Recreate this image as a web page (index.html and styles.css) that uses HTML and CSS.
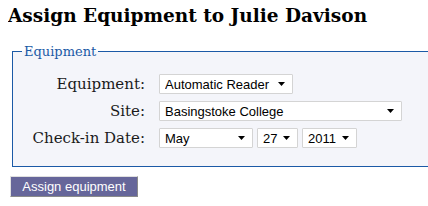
FILE: index.html
```
<!DOCTYPE html>
<html lang="en">

<head>
  <meta charset="UTF-8" />
  <title>Assign Equipment</title>
  <link rel="stylesheet" href="styles.css">
</head>

<body>
  <h1>Assign Equipment to Julie Davison</h1>
  <form class="assign-form">
    <fieldset class="box">
      <legend>Equipment</legend>
      <div class="rows">
        <label for="equipment">Equipment:</label>
        <div class="field">
          <select id="equipment" class="w-equip">
            <option>Automatic Reader</option>
          </select>
        </div>

        <label for="site">Site:</label>
        <div class="field">
          <select id="site" class="w-site">
            <option>Basingstoke College</option>
          </select>
        </div>

        <label for="month">Check-in Date:</label>
        <div class="field">
          <select id="month" class="w-month">
            <option>May</option>
          </select>
          <select class="w-day">
            <option>27</option>
          </select>
          <select class="w-year">
            <option>2011</option>
          </select>
        </div>
      </div>
    </fieldset>
    <button type="submit" class="btn">Assign equipment</button>
  </form>
</body>

</html>
```

FILE: styles.css
```
body {
  margin: 8px;
  width: 460px;
  overflow: hidden;
  background: #fff;
}

h1 {
  margin: -4px 0 16px 0;
  font-family: "DejaVu Serif", serif;
  font-weight: bold;
  font-size: 18.5px;
  line-height: 24px;
  color: #000;
}

.box {
  margin: 0 0 0 4px;
  padding: 15px 0 18px 0;
  border: 1px solid #1b5aa6;
  background: #f4f5fa;
}

.box legend {
  margin-left: 9px;
  padding: 0 2px;
  font-family: "DejaVu Serif", serif;
  font-size: 13px;
  color: #1b5aa6;
}

.rows {
  display: grid;
  grid-template-columns: 132px auto;
  column-gap: 14px;
  row-gap: 7px;
  align-items: center;
}

.rows label {
  text-align: right;
  font-family: "DejaVu Serif", serif;
  font-size: 15px;
  line-height: 18px;
  color: #1a1a1a;
}

.field {
  display: flex;
  gap: 4px;
}

select {
  appearance: none;
  height: 20px;
  margin: 0;
  padding: 0 0 0 5px;
  border: 1px solid #d4d4d4;
  border-radius: 1px;
  background: #fff url("data:image/svg+xml,%3Csvg xmlns='http://www.w3.org/2000/svg' width='7' height='4'%3E%3Cpath d='M0 0h7L3.5 4z' fill='%23000'/%3E%3C/svg%3E") no-repeat right 7px center;
  font-family: "Liberation Sans", Arial, sans-serif;
  font-size: 13px;
  color: #000;
}

.w-equip { width: 134px; }
.w-site { width: 243px; }
.w-month { width: 94px; }
.w-day { width: 41px; }
.w-year { width: 55px; }

.btn {
  margin: 9px 0 0 2px;
  width: 128px;
  height: 21px;
  padding: 0;
  border: 1px solid;
  border-color: #e0e0e0 #8a8a8a #8a8a8a #e0e0e0;
  background: #66669a;
  color: #fff;
  font-family: "Liberation Sans", Arial, sans-serif;
  font-size: 13px;
}
```
